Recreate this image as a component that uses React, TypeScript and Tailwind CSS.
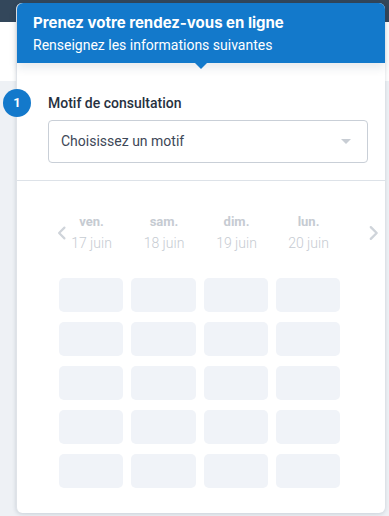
import { ChevronLeft, ChevronRight } from 'lucide-react';

const days = [
  { name: 'ven.', date: '17 juin' },
  { name: 'sam.', date: '18 juin' },
  { name: 'dim.', date: '19 juin' },
  { name: 'lun.', date: '20 juin' },
];

const slots = Array.from({ length: 20 }, (_, i) => i);

export default function App() {
  return (
    <div className="h-[516px] w-[389px] overflow-hidden bg-[linear-gradient(to_bottom,#33475b_0,#33475b_22px,#ffffff_22px,#ffffff_81px,#eef1f5_81px)] pt-[3px] font-['Roboto',sans-serif]">
      <div className="ml-[16px] h-[510px] w-[369px] rounded-md border-l border-[#dfe3e8] bg-white shadow-[0_1px_4px_rgba(30,50,80,0.18)]">
        <div className="relative z-10 h-[60px] rounded-t-md bg-[#1379cb] px-4 pt-[9px] shadow-[0_5px_10px_rgba(30,50,80,0.10)]">
          <p className="font-['Inter',sans-serif] text-[15px] font-bold leading-[22px] text-white">
            Prenez votre rendez-vous en ligne
          </p>
          <p className="mt-[1px] text-[14px] leading-[20px] text-white">
            Renseignez les informations suivantes
          </p>
          <span className="absolute left-[178px] top-[60px] h-0 w-0 border-x-[6px] border-t-[6px] border-x-transparent border-t-[#1379cb]" />
        </div>

        <section className="border-b border-[#dde2e8] pb-[17px] pt-[26px]">
          <div className="flex h-[28px] items-center">
            <span className="-ml-[14px] flex h-[28px] w-[28px] items-center justify-center rounded-full bg-[#1379cb] text-[13px] font-bold text-white">
              1
            </span>
            <h2 className="ml-[17px] text-[14px] font-medium text-[#27313f]">Motif de consultation</h2>
          </div>
          <div className="ml-[31px] mr-[17px] mt-[3px] flex h-[43px] items-center justify-between rounded border border-[#c9cfd7] pl-[12px] pr-[16px]">
            <span className="text-[14px] text-[#3d4757]">Choisissez un motif</span>
            <span className="h-0 w-0 border-x-[5px] border-t-[5px] border-x-transparent border-t-[#c8cdd4]" />
          </div>
        </section>

        <section className="pt-[32px]">
          <div className="ml-[34px] flex items-center">
            <ChevronLeft className="h-[22px] w-[22px] text-[#cfd4da]" strokeWidth={2.4} />
            <div className="-ml-[13px] grid grid-cols-[64px_65px_64px_64px] gap-x-[8px] text-center">
              {days.map((d) => (
                <div key={d.name} className="flex flex-col items-center">
                  <span className="text-[13px] font-bold leading-[18px] text-[#c6cbd2]">{d.name}</span>
                  <span className="mt-[2px] text-[14px] font-light leading-[20px] text-[#c6cbd2]">{d.date}</span>
                </div>
              ))}
            </div>
            <ChevronRight className="ml-[21px] h-[24px] w-[24px] text-[#cfd4da]" strokeWidth={2.4} />
          </div>

          <div className="ml-[42px] mt-[25px] grid w-[282px] grid-cols-[64px_65px_64px_64px] gap-x-[8px] gap-y-[10px]">
            {slots.map((i) => (
              <div key={i} className="h-[34px] rounded-[5px] bg-[#f0f3f8]" />
            ))}
          </div>
        </section>
      </div>
    </div>
  );
}
